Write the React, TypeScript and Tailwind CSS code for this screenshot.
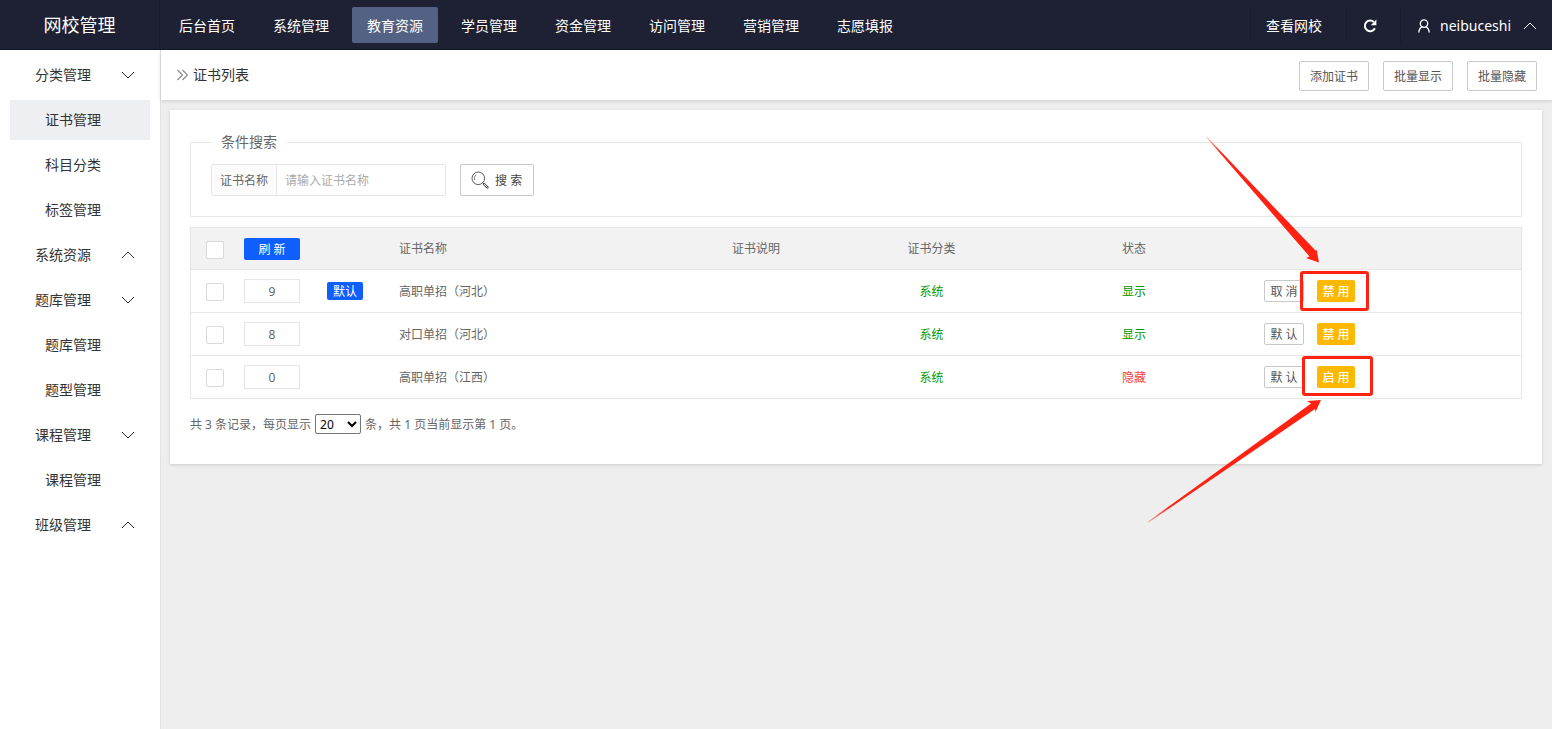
import { useState } from "react";
import { clsx } from "clsx";

interface Cert {
  id: number;
  sort: string;
  name: string;
  isDefault: boolean;
  visible: boolean;
}

const topNav = ["后台首页", "系统管理", "教育资源", "学员管理", "资金管理", "访问管理", "营销管理", "志愿填报"];

const sideNav = [
  { title: "分类管理", open: true, children: ["证书管理", "科目分类", "标签管理"] },
  { title: "系统资源", open: false, children: [] },
  { title: "题库管理", open: true, children: ["题库管理", "题型管理"] },
  { title: "课程管理", open: true, children: ["课程管理"] },
  { title: "班级管理", open: false, children: [] },
];

const certs: Cert[] = [
  { id: 1, sort: "9", name: "高职单招（河北）", isDefault: true, visible: true },
  { id: 2, sort: "8", name: "对口单招（河北）", isDefault: false, visible: true },
  { id: 3, sort: "0", name: "高职单招（江西）", isDefault: false, visible: false },
];

function Chevron({ up, className }: { up?: boolean; className?: string }) {
  return (
    <svg viewBox="0 0 14 14" className={clsx("h-3.5 w-3.5 shrink-0", className)} fill="none" stroke="currentColor" strokeWidth="1">
      <path d={up ? "M1 10 L7 4 L13 10" : "M1 4 L7 10 L13 4"} />
    </svg>
  );
}

function RefreshIcon() {
  return (
    <svg viewBox="0 0 14 14" className="h-3.5 w-3.5" fill="none">
      <path d="M10.8 3 A5.3 5.3 0 1 0 11.9 9.2" stroke="currentColor" strokeWidth="2" />
      <path d="M13.4 0.6 V6.2 H7.8 Z" fill="currentColor" />
    </svg>
  );
}

function UserIcon() {
  return (
    <svg viewBox="0 0 14 14" className="h-3.5 w-3.5" fill="none" stroke="currentColor" strokeWidth="1.3">
      <circle cx="7" cy="4.6" r="3.7" />
      <path d="M5 7.800 C3 8.8 1.9 10.6 1.8 13.6 M9 7.800 C11 8.8 12.1 10.6 12.2 13.6" />
    </svg>
  );
}

function SearchIcon() {
  return (
    <svg viewBox="0 0 18 18" className="h-[18px] w-[18px]" fill="none" stroke="currentColor">
      <circle cx="7.3" cy="7.3" r="6.3" strokeWidth="0.9" />
      <path d="M3.8 9.2 A4 4 0 0 1 5.2 3.9" strokeWidth="0.7" />
      <path d="M11.8 11.8 L13.2 13.2" strokeWidth="0.9" />
      <path d="M13 13 L16.4 16.4" strokeWidth="2.400" strokeLinecap="round" />
      <path d="M13.2 13.2 L16.2 16.2" stroke="#fff" strokeWidth="1" strokeLinecap="round" />
    </svg>
  );
}

function Header() {
  return (
    <header className="flex h-[50px] shrink-0 items-stretch border-b border-[#15182a] bg-[#1d2133] text-sm text-white">
      <h1 className="flex w-40 shrink-0 items-center justify-center border-r border-[#191c2d] text-lg">网校管理</h1>
      <nav className="flex items-center gap-2 pl-1">
        {topNav.map((item) => (
          <a
            key={item}
            href="#"
            className={clsx("flex h-9 items-center rounded-xs px-[15px] pt-0.5 whitespace-nowrap", item === "教育资源" && "bg-[#536184]")}
          >
            {item}
          </a>
        ))}
      </nav>
      <div className="ml-auto flex items-center">
        <a href="#" className="flex h-9 items-center border-l border-[#191c2d] px-[15px] pt-0.5 pr-6 whitespace-nowrap">查看网校</a>
        <button type="button" aria-label="刷新页面" className="flex h-9 w-[54px] items-center border-l border-[#191c2d] pt-0.5 pl-4">
          <RefreshIcon />
        </button>
        <button type="button" className="flex h-9 items-center border-l border-[#191c2d] pt-0.5 pr-[15px] pl-4">
          <UserIcon />
          <span className="mr-3 ml-[9px]">neibuceshi</span>
          <Chevron up />
        </button>
      </div>
    </header>
  );
}

function Sidebar() {
  return (
    <aside className="w-40 shrink-0 bg-white pt-[5px] text-sm text-[#333]">
      {sideNav.map((group) => (
        <div key={group.title}>
          <button type="button" className="mb-[5px] flex h-10 w-full items-center justify-between pr-[25px] pl-[35px]">
            {group.title}
            <Chevron up={!group.open} />
          </button>
          {group.children.map((child) => (
            <a
              key={child}
              href="#"
              className={clsx("mx-2.5 mb-[5px] flex h-10 items-center pl-[35px]", child === "证书管理" && "bg-[#eeeff3]")}
            >
              {child}
            </a>
          ))}
        </div>
      ))}
    </aside>
  );
}

function Checkbox({ label }: { label: string }) {
  return (
    <input
      type="checkbox"
      aria-label={label}
      className="mt-0.5 ml-[15px] block h-[18px] w-[18px] appearance-none rounded-xs border border-[#d9d9d9] bg-white checked:bg-[#0f5fff]"
    />
  );
}

// red frame drawn around the action button, with an arrow pointing at it
function Callout({ from }: { from: "top" | "bottom" }) {
  if (from === "top") {
    return (
      <>
        <span className="pointer-events-none absolute -top-[9px] -left-[17px] h-10 w-[69px] rounded-[3px] border-3 border-[#ff2213]" />
        <svg viewBox="0 0 114 126" className="pointer-events-none absolute -top-[143px] -left-[111px] h-[126px] w-[114px] max-w-none">
          <defs>
            <linearGradient id="fadeTop" x1="0" y1="0" x2="1" y2="1">
              <stop offset="0" stopColor="#ff2213" stopOpacity="0.3" />
              <stop offset="0.12" stopColor="#ff2213" />
            </linearGradient>
          </defs>
          <path d="M0 0 L1 0 L110 114 L110.500 112 L113 125.500 L100 121 L103.500 119.500 Z" fill="url(#fadeTop)" />
        </svg>
      </>
    );
  }
  return (
    <>
      <span className="pointer-events-none absolute -top-2.5 -left-[15px] h-10 w-[71px] rounded-[3px] border-3 border-[#ff2213]" />
      <svg viewBox="0 0 174 124" className="pointer-events-none absolute top-[33px] -left-[169px] h-[124px] w-[174px] max-w-none">
        <defs>
          <linearGradient id="fadeBottom" x1="0" y1="1" x2="1" y2="0">
            <stop offset="0" stopColor="#ff2213" stopOpacity="0.3" />
            <stop offset="0.12" stopColor="#ff2213" />
          </linearGradient>
        </defs>
        <path d="M0 122.500 L0.500 123.500 L167 10 L167.500 13 L173 1 L159 2 L163 4.500 Z" fill="url(#fadeBottom)" />
      </svg>
    </>
  );
}

export default function App() {
  const [keyword, setKeyword] = useState("");

  return (
    <div className="flex min-h-screen flex-col bg-[#eee] font-['Noto_Sans','Noto_Sans_CJK_SC',sans-serif] text-xs text-[#666]">
      <Header />
      <div className="flex grow">
        <Sidebar />
        <main className="min-w-0 grow border-l border-[#e2e2e2]">
          <div className="flex h-[50px] items-center justify-between bg-white pr-[15px] pl-4 shadow-[0_1px_4px_rgba(0,0,0,0.15)]">
            <h2 className="flex items-center gap-[5px] text-sm text-[#333]">
              <svg viewBox="0 0 11 12" className="h-3 w-[11px]" fill="none" stroke="#888" strokeWidth="1.2">
                <path d="M0.500 1 L5.500 6 L0.500 11 M5.500 1 L10.500 6 L5.500 11" />
              </svg>
              证书列表
            </h2>
            <div className="flex gap-3.5">
              {["添加证书", "批量显示", "批量隐藏"].map((label) => (
                <button key={label} type="button" className="mt-0.5 h-[30px] w-[70px] rounded-xs border border-[#c9c9c9] bg-white pt-0.5 text-[#555]">
                  {label}
                </button>
              ))}
            </div>
          </div>

          <section className="mt-2.5 mr-2.5 ml-[9px] bg-white p-5 pb-[30px] shadow-[0_1px_3px_rgba(0,0,0,0.15)]">
            <form onSubmit={(e) => e.preventDefault()}>
              <fieldset className="border border-[#e6e6e6] px-5 pt-2.5 pb-5">
                <legend className="px-2.5 text-sm leading-6">条件搜索</legend>
                <div className="flex">
                  <label htmlFor="certName" className="flex h-8 items-center rounded-l-xs border border-r-0 border-[#e6e6e6] bg-[#fbfbfb] px-2 pt-0.5">
                    证书名称
                  </label>
                  <input
                    id="certName"
                    value={keyword}
                    onChange={(e) => setKeyword(e.target.value)}
                    placeholder="请输入证书名称"
                    className="h-8 w-[170px] rounded-r-xs border border-[#e6e6e6] px-2 placeholder:text-[#aaa]"
                  />
                  <button type="submit" className="ml-3.5 flex h-8 w-[74px] items-center gap-1.5 rounded-xs border border-[#c9c9c9] bg-white px-2.5 text-[#444]">
                    <SearchIcon />
                    <span className="pt-0.5">搜 索</span>
                  </button>
                </div>
              </fieldset>
            </form>

            <table className="mt-2.5 w-full table-fixed border-separate border-spacing-0 border border-b-0 border-[#e6e6e6]">
              <colgroup>
                <col className="w-[49px]" />
                <col className="w-16" />
                <col className="w-[82px]" />
                <col />
                <col className="w-[168px]" />
                <col className="w-[183px]" />
                <col className="w-[222px]" />
                <col className="w-[276px]" />
              </colgroup>
              <thead className="bg-[#f2f2f2]">
                <tr className="h-[42px] *:border-b *:border-[#e6e6e6] *:p-0 *:font-normal">
                  <th><Checkbox label="全选" /></th>
                  <th>
                    <button type="button" className="mx-auto block h-[22px] w-14 rounded-xs bg-[#0f5fff] pt-0.5 text-white">刷 新</button>
                  </th>
                  <th />
                  <th><div className="pl-[13px] text-left">证书名称</div></th>
                  <th>证书说明</th>
                  <th>证书分类</th>
                  <th>状态</th>
                  <th />
                </tr>
              </thead>
              <tbody>
                {certs.map((cert) => (
                  <tr key={cert.id} className="h-[43px] text-center *:border-b *:border-[#e6e6e6]">
                    <td><Checkbox label={cert.name} /></td>
                    <td>
                      <input
                        defaultValue={cert.sort}
                        aria-label="排序"
                        className="mx-auto block h-6 w-14 border border-[#e6e6e6] text-center"
                      />
                    </td>
                    <td>
                      {cert.isDefault && (
                        <span className="mx-auto block h-[18px] w-9 rounded-xs bg-[#0f5fff] leading-5 text-white">默认</span>
                      )}
                    </td>
                    <td className="pt-0.5"><div className="pl-[13px] text-left">{cert.name}</div></td>
                    <td />
                    <td className="pt-0.5 text-[#090]">系统</td>
                    <td className={clsx("pt-0.5", cert.visible ? "text-[#090]" : "text-[#f2413f]")}>{cert.visible ? "显示" : "隐藏"}</td>
                    <td>
                      <div className="flex gap-[13px] pl-[19px]">
                        <button type="button" className="h-[22px] w-10 rounded-xs border border-[#c9c9c9] bg-white pt-0.5 text-[#555]">
                          {cert.isDefault ? "取 消" : "默 认"}
                        </button>
                        <div className="relative">
                          <button type="button" className="block h-[22px] w-[38px] rounded-xs bg-[#ffb800] pt-0.5 font-medium text-white">
                            {cert.visible ? "禁 用" : "启 用"}
                          </button>
                          {cert.id === 1 && <Callout from="top" />}
                          {cert.id === 3 && <Callout from="bottom" />}
                        </div>
                      </div>
                    </td>
                  </tr>
                ))}
              </tbody>
            </table>

            <div className="mt-[15px] flex h-5 items-center gap-1 whitespace-nowrap">
              <label htmlFor="pageSize" className="pt-0.5">共 3 条记录，每页显示</label>
              <select id="pageSize" defaultValue="20" className="h-5 w-[46px] rounded-xs border border-[#767676] bg-white text-black">
                <option>20</option>
                <option>50</option>
                <option>100</option>
              </select>
              <span className="pt-0.5">条，共 1 页当前显示第 1 页。</span>
            </div>
          </section>
        </main>
      </div>
    </div>
  );
}
